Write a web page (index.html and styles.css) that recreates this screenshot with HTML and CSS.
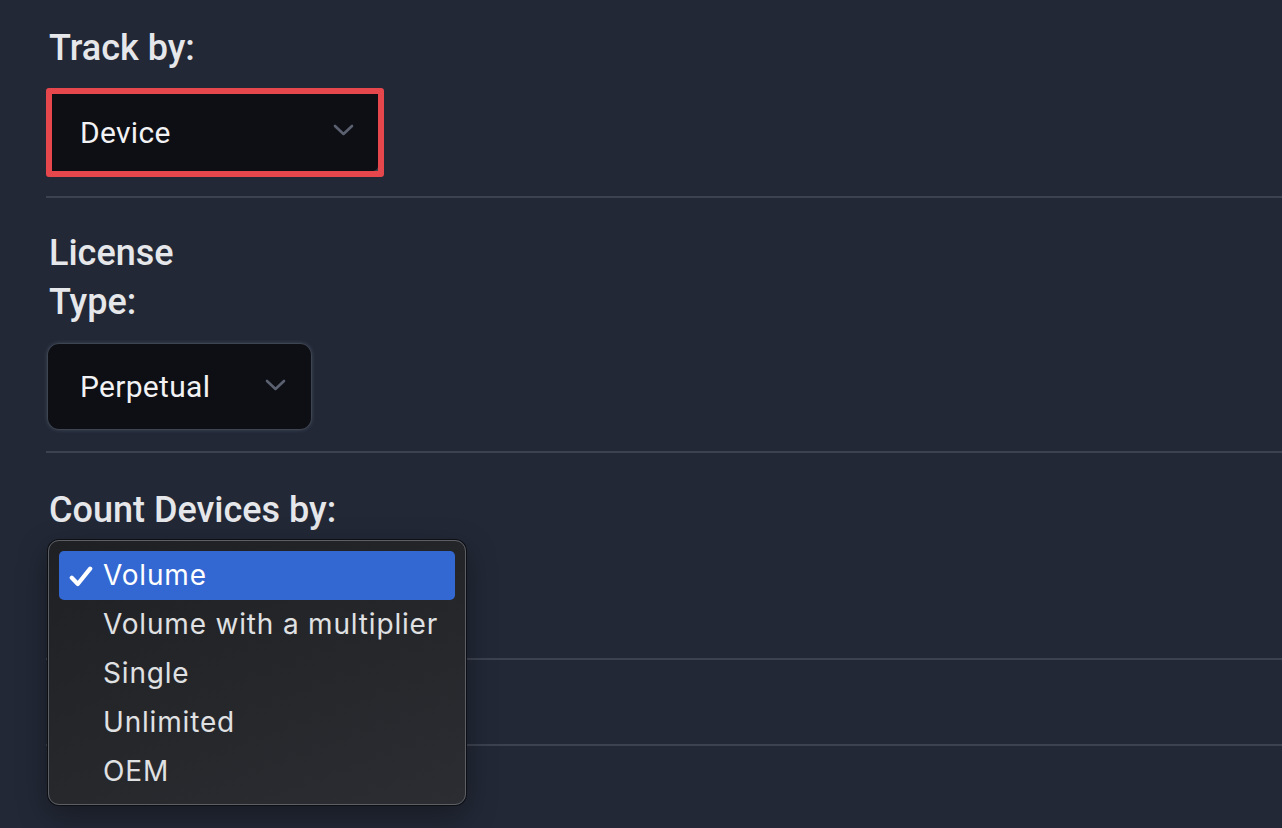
FILE: index.html
```html
<!DOCTYPE html>
<html lang="en">
<head>
<meta charset="utf-8">
<title>License settings</title>
<link rel="stylesheet" href="styles.css">
</head>
<body>
<main class="form">
  <section class="field field-track">
    <div class="label">Track by:</div>
    <div class="focus-ring">
      <div class="select select-device">
        <span class="select-value">Device</span>
        <svg class="chevron" width="21" height="12" viewBox="0 0 21 12"><path d="M2 2 L10.5 10 L19 2" fill="none" stroke="#5b6170" stroke-width="2.6" stroke-linecap="round" stroke-linejoin="round"/></svg>
      </div>
    </div>
  </section>
  <section class="field field-license">
    <div class="label label-narrow">License Type:</div>
    <div class="select select-perpetual">
      <span class="select-value">Perpetual</span>
      <svg class="chevron" width="21" height="12" viewBox="0 0 21 12"><path d="M2 2 L10.5 10 L19 2" fill="none" stroke="#5b6170" stroke-width="2.6" stroke-linecap="round" stroke-linejoin="round"/></svg>
    </div>
  </section>
  <section class="field field-count">
    <div class="label">Count Devices by:</div>
    <div class="menu">
      <div class="menu-item is-selected">
        <span class="check"><svg width="24" height="21" viewBox="0 0 24 21"><path d="M2.8 11.8 L8.8 18 L21.2 2.6" fill="none" stroke="#ffffff" stroke-width="4.2" stroke-linecap="round" stroke-linejoin="round"/></svg></span>
        <span>Volume</span>
      </div>
      <div class="menu-item"><span class="check"></span><span>Volume with a multiplier</span></div>
      <div class="menu-item"><span class="check"></span><span>Single</span></div>
      <div class="menu-item"><span class="check"></span><span>Unlimited</span></div>
      <div class="menu-item"><span class="check"></span><span>OEM</span></div>
    </div>
  </section>
  <section class="field field-extra"></section>
  <section class="field field-last"></section>
</main>
</body>
</html>
```

FILE: styles.css
```css
* { box-sizing: border-box; }

html, body {
  margin: 0;
  height: 100%;
}

body {
  background: #222836;
  overflow: hidden;
  font-family: Roboto, "Liberation Sans", Arial, sans-serif;
}

.form {
  padding-left: 46px;
}

.field {
  position: relative;
  border-bottom: 2px solid #3c4250;
}

.label {
  font-size: 36px;
  line-height: 49px;
  font-weight: 500;
  color: #e6e7ea;
  margin-left: 3px;
}

.label-narrow {
  max-width: 190px;
}

.field-track {
  padding-top: 24px;
  padding-bottom: 19px;
}

.field-track .focus-ring {
  margin-top: 15px;
}

.field-license {
  padding-top: 31px;
  padding-bottom: 22px;
}

.field-license .select {
  margin-top: 17px;
  margin-left: 2px;
}

.field-count {
  padding-top: 33px;
  height: 207px;
  z-index: 2;
}

.field-extra {
  height: 86px;
}

.field-last {
  height: 82px;
  border-bottom: none;
}

.focus-ring {
  width: 338px;
  height: 89px;
  border: 6px solid #e5474d;
  border-radius: 3px;
  background: #3a3e48;
}

.select {
  display: flex;
  align-items: center;
  justify-content: space-between;
  background: #0d0f14;
  color: #f2f2f4;
  font-size: 30px;
  font-weight: 400;
  letter-spacing: 0.3px;
}

.select-device {
  width: 326px;
  height: 77px;
  border-radius: 0 0 5px 0;
  padding: 0 24px 0 28px;
}

.select-device .chevron {
  margin-top: -6px;
}

.select-perpetual {
  width: 263px;
  height: 85px;
  border-radius: 11px;
  padding: 0 25px 0 32px;
  box-shadow: 0 0 0 1px rgba(255, 255, 255, 0.05), 0 0 5px rgba(190, 200, 220, 0.28);
}

.select-perpetual .chevron {
  margin-top: -4px;
}

.menu {
  position: absolute;
  z-index: 10;
  left: 2px;
  top: 87px;
  width: 418px;
  height: 265px;
  padding: 10px 10px;
  border-radius: 11px;
  border: 1px solid #5c5f65;
  background: linear-gradient(160deg, #1e2024 0%, #25272b 55%, #2b2d32 100%);
  box-shadow: 0 0 0 1px #0e0f12, 0 10px 30px rgba(0, 0, 0, 0.35);
  font-family: Inter, "Liberation Sans", Arial, sans-serif;
  font-size: 28px;
  letter-spacing: 0.82px;
  color: #e0e1e3;
}

.menu-item {
  display: flex;
  align-items: flex-start;
  height: 49px;
  padding-top: 1px;
  line-height: 47px;
  padding-left: 10px;
  border-radius: 5px;
}

.menu-item.is-selected {
  background: #3367d1;
  color: #ffffff;
}

.check {
  width: 34px;
  flex: none;
  display: flex;
  align-items: center;
  height: 47px;
}

.check svg {
  margin-top: 1px;
}
```
